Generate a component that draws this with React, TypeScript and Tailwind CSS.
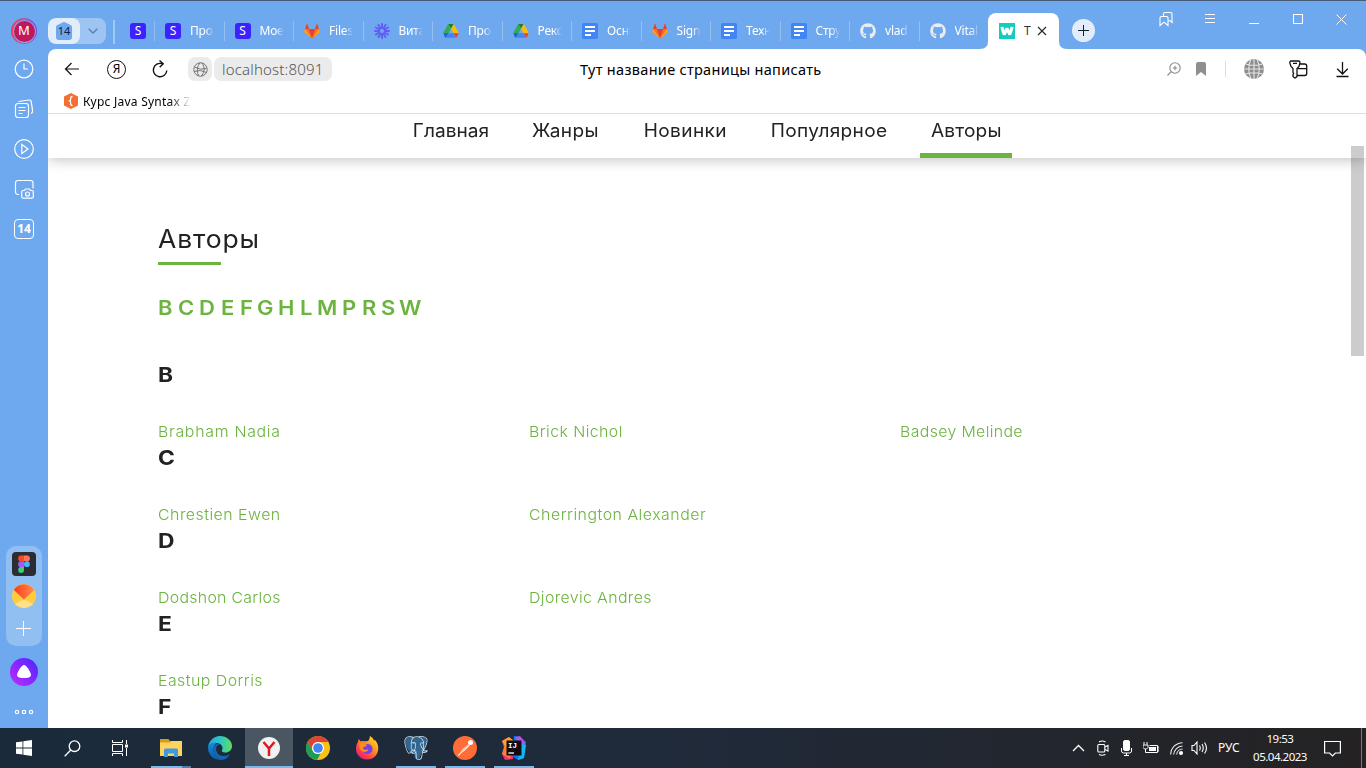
import React from "react";
import { FaGithub } from "react-icons/fa";
import { SiPostgresql } from "react-icons/si";

const UI = "font-['Noto_Sans','Open_Sans',sans-serif]";
const PAGE = "font-[Inter,'Open_Sans',sans-serif]";

function SIcon() {
  return (
    <span className="flex size-4 items-center justify-center rounded-[3px] bg-[#3d22ff] text-[12px] leading-none text-white">S</span>
  );
}

function GitlabIcon() {
  return (
    <svg width="16" height="16" viewBox="0 0 16 16">
      <path d="M3 .5 5 6h6l2-5.500L16 9l-8 6.500L0 9z" fill="#fc6d26" />
      <path d="M5 6h6l-3 9.500z" fill="#e24329" />
      <path d="m3 .5 2 5.500H1.200zM13 .5l1.800 5.500H11z" fill="#e24329" />
      <path d="M0 9 1.200 6 8 15.500zM16 9l-1.200-3L8 15.500z" fill="#fca326" />
    </svg>
  );
}

function LoomIcon() {
  return (
    <svg width="16" height="16" viewBox="-8 -8 16 16" stroke="#625df5" strokeWidth="2" strokeLinecap="round">
      <path d="M0-7V-3M0 3V7M-7 0H-3M3 0H7M3.500-6.060 1.500-2.600M-1.500 2.600-3.500 6.060M6.060-3.500 2.600-1.500M-2.600 1.500-6.060 3.500M-3.500-6.060-1.500-2.600M1.500 2.600 3.500 6.060M-6.060-3.500-2.600-1.500M2.600 1.500 6.060 3.500" />
      <circle r="3.300" fill="none" strokeWidth="1.200" />
    </svg>
  );
}

function DriveIcon() {
  return (
    <svg width="16" height="16" viewBox="0 0 16 16">
      <path d="M5.200 1h5.600L8 5.800z" fill="#188038" />
      <path d="M5.200 1 8 5.800 3.800 13 .6 10.800Q.3 10 .7 9z" fill="#34a853" />
      <path d="M10.800 1 15.300 9q.3.700.1 1.300h-4.900L8 5.800z" fill="#fbbc04" />
      <path d="M.5 10.300h5L3 14.700Q2 14.500 1.500 13.500z" fill="#1967d2" />
      <path d="M5.500 10.300h5.200l2.300 4.400H3z" fill="#4285f4" />
      <path d="M10.700 10.300h4.900l-1.300 3.200q-.5 1-1.300 1.200z" fill="#ea4335" />
    </svg>
  );
}

function DocsIcon() {
  return (
    <svg width="16" height="16" viewBox="0 0 16 16">
      <rect width="16" height="16" rx="1.500" fill="#4285f4" />
      <path d="M3 4h10M3 8h10M3 12h6" stroke="#fff" strokeWidth="2" />
    </svg>
  );
}

const github = <FaGithub size={16} color="#e9edf2" />;

const tabs: { icon: React.ReactNode; title: string }[] = [
  { icon: <SIcon />, title: "Про" },
  { icon: <SIcon />, title: "Мое" },
  { icon: <GitlabIcon />, title: "Files" },
  { icon: <LoomIcon />, title: "Вита" },
  { icon: <DriveIcon />, title: "Про" },
  { icon: <DriveIcon />, title: "Рекс" },
  { icon: <DocsIcon />, title: "Осн" },
  { icon: <GitlabIcon />, title: "Sign" },
  { icon: <DocsIcon />, title: "Техн" },
  { icon: <DocsIcon />, title: "Стру" },
  { icon: github, title: "vlad" },
  { icon: github, title: "Vital" },
];

function TabBar() {
  return (
    <div className="flex h-[48px] shrink-0">
      <div className="mt-[17px] flex h-[26px] w-[58px] overflow-hidden rounded-lg bg-[#9dc4f3]">
        <div className="flex w-8 items-center justify-center rounded-lg bg-[#e2edfb]">
          <svg width="18" height="18" viewBox="0 0 18 18">
            <path d="M9 0q.8 0 1.500.4l5.500 2.900q1 .6 1 1.700v10q0 3-3 3H4q-3 0-3-3V5q0-1.100 1-1.700L7.500.4Q8.200 0 9 0" fill="#6ea8ee" />
            <text x="9" y="13" textAnchor="middle" fontSize="11" fill="#10223c">14</text>
          </svg>
        </div>
        <svg className="m-auto" width="10" height="6" viewBox="0 0 10 6" fill="none" stroke="#5580b5" strokeWidth="1.300">
          <path d="m.7.700 4.300 4.300L9.300.7" />
        </svg>
      </div>
      <div className="mt-[19px] ml-[7px] h-6 w-[2px] bg-[#a3c8f5]" />
      <div className="mt-[22px] ml-[15px] w-6"><SIcon /></div>
      {tabs.map((t, i) => (
        <div key={i} className="mt-[20px] flex h-5 w-[69.500px] shrink-0 items-center border-l border-[#93bff3]">
          <span className="ml-[10px] flex size-4 shrink-0">{t.icon}</span>
          <span className="ml-[9px] w-[31px] text-[12px] leading-5 tracking-[-.2px] whitespace-nowrap text-white [mask-image:linear-gradient(90deg,#000_50%,transparent_78%)]">{t.title}</span>
        </div>
      ))}
      <div className="relative mt-3 flex h-9 w-[71px] shrink-0 items-center rounded-t-lg bg-white">
        <svg className="absolute bottom-0 -left-2" width="8" height="8"><path d="M8 0v8H0q8 0 8-8" fill="#fff" /></svg>
        <svg className="absolute -right-2 bottom-0" width="8" height="8"><path d="M0 0v8h8Q0 8 0 0" fill="#fff" /></svg>
        <svg className="ml-[11px]" width="16" height="16" viewBox="0 0 16 16">
          <rect width="16" height="16" fill="#13cdbd" />
          <path d="M2.800 4 5.200 11.500 8 5.500 10.800 11.500 13.200 4" fill="none" stroke="#fff" strokeWidth="3" strokeLinejoin="bevel" />
        </svg>
        <span className="ml-[9px] w-2 text-[12px] text-[#333]">Т</span>
        <svg className="ml-[5px]" width="10" height="10" viewBox="0 0 10 10" stroke="#222b38" strokeWidth="1.200"><path d="m1 1 8 8m0-8-8 8" /></svg>
      </div>
      <div className="mt-[18px] ml-[13px] flex size-[23px] shrink-0 items-center justify-center rounded-full bg-[#e2edfb]">
        <svg width="11" height="11" stroke="#15202e"><path d="M5.500 0v11M0 5.500h11" /></svg>
      </div>
      <svg className="mt-[11px] ml-[64px] shrink-0" width="14" height="15" viewBox="0 0 14 15" fill="none" stroke="#fff" strokeWidth="1.100">
        <path d="M1 13.500V6q0-1.500 1.500-1.500h5Q9 4.500 9 6v7.500L5 10.200zM4.500 4.500V2Q4.500.5 6 .5h5.500Q13 .5 13 2v8.500l-2-1.800H9" />
      </svg>
      <svg className="mt-[13px] ml-[32px] shrink-0" width="10" height="11" stroke="#fff"><path d="M0 .5h10M0 4.500h10M0 8.500h10" /></svg>
      <svg className="mt-[22px] ml-[34px] shrink-0" width="10" height="2" stroke="#fff"><path d="M0 .5h10" /></svg>
      <svg className="mt-[13px] ml-[34px] shrink-0" width="10" height="11" fill="none" stroke="#fff"><rect x=".5" y=".5" width="9" height="9" /></svg>
      <svg className="mt-[13px] ml-[33px] shrink-0" width="11" height="11" stroke="#fff"><path d="m.5.500 10 10m0-10-10 10" /></svg>
    </div>
  );
}

function Toolbar() {
  return (
    <div className="flex h-[40px] items-center text-black">
      <svg className="ml-4" width="16" height="14" viewBox="0 0 16 14" fill="none" stroke="#111" strokeWidth="1.200"><path d="M15 7H1.500M7.500 1l-6 6 6 6" /></svg>
      <div className="ml-[27px] flex size-[19px] items-center justify-center rounded-full border-[1.500px] border-[#111] text-[12px] leading-none">Я</div>
      <svg className="ml-[26px]" width="17" height="18" viewBox="0 0 17 18" fill="none" stroke="#111" strokeWidth="1.400"><path d="M14.800 10.500a6.700 6.700 0 1 1-4.600-6.800M7.500.5l3.700 3.200-3.500 3.500" /></svg>
      <div className="ml-[19px] flex h-6 w-6 items-center justify-center rounded-[7px] bg-[#ebebeb]">
        <svg width="15" height="15" viewBox="0 0 15 15" fill="none" stroke="#757575"><circle cx="7.500" cy="7.500" r="6.700" /><path d="M1.500 5q5.500 3.500 12 1.500M1.200 9.500Q7 7 13.500 10.500M7 .8Q2.500 6 5.500 14M9 .9q4.500 6-.5 13.400" /></svg>
      </div>
      <div className="ml-[2px] flex h-6 w-[118px] items-center rounded-[7px] bg-[#ebebeb] pl-2 text-[15px] font-light tracking-[.180px] text-[#555]">localhost:8091</div>
      <div className="ml-[248px] w-[260px] pt-px text-[14.500px] tracking-[.3px] whitespace-nowrap">Тут название страницы написать</div>
      <svg className="ml-[327px]" width="14" height="15" viewBox="0 0 14 15" fill="none" stroke="#8a8a8a" strokeWidth="1.100"><circle cx="8" cy="6" r="5.200" /><path d="M4.200 9.700.5 13.500M8 3.700v4.600M5.700 6h4.600" /></svg>
      <svg className="ml-[15px]" width="10" height="14"><path d="M0 14V2q0-2 2-2h6q2 0 2 2v12l-5-4z" fill="#8f8f8f" /></svg>
      <div className="ml-[19px] h-4 w-px bg-[#ddd]" />
      <svg className="ml-[18px]" width="20" height="20" viewBox="0 0 20 20" fill="none"><circle cx="10" cy="10" r="10" fill="#8d8d8d" /><path d="M10 0v20M0 10h20M1.500 5q8.500 2.500 17 0M1.500 15q8.500-2.500 17 0M7 0Q2.500 10 7 20M13 0q4.500 10 0 20" stroke="#e5e5e5" strokeWidth="1.100" /></svg>
      <svg className="ml-[25px]" width="19" height="19" viewBox="0 0 19 19" fill="none" stroke="#111" strokeWidth="1.300"><path d="M2 1h7.500q1.500 0 1.500 1.700L10 6.500 8 8.500v8l-1.500 1.300H5.500L4 16.500v-2l.7-1-.7-1v-4l-2-2L.8 3Q.8 1 2 1M4 3.300h4M10.700 4h5q2 0 2 2v7.500q0 2-2 2H8M9 8.700h8.700" /></svg>
      <svg className="ml-[28px]" width="13" height="17" viewBox="0 0 13 17" fill="none" stroke="#111" strokeWidth="1.300"><path d="M6.500 1v12M1.200 7.700l5.300 5.300 5.300-5.300M.5 15.500h12" /></svg>
    </div>
  );
}

const nav = [
  { t: "Главная", w: "w-[97px]", tr: "tracking-[.020px]" },
  { t: "Жанры", w: "w-[88px]", tr: "tracking-[.350px]" },
  { t: "Новинки", w: "w-[105px]", tr: "tracking-[.380px]" },
  { t: "Популярное", w: "w-[138px]", tr: "tracking-[.300px]" },
  { t: "Авторы", w: "w-[92px]", tr: "tracking-[.150px]" },
];

const letters = [
  ["B", "w-[20px]"], ["C", "w-[20.500px]"], ["D", "w-[22px]"], ["E", "w-[19px]"], ["F", "w-[17.500px]"], ["G", "w-[21px]"],
  ["H", "w-[21.500px]"], ["L", "w-[17.500px]"], ["M", "w-[24.500px]"], ["P", "w-[20px]"], ["R", "w-[19.500px]"], ["S", "w-[18px]"], ["W", "w-[24px]"],
];

const sections = [
  { l: "B", names: [["Brabham Nadia", "tracking-[.660px]"], ["Brick Nichol", "tracking-[.390px]"], ["Badsey Melinde", "tracking-[.320px]"]] },
  { l: "C", names: [["Chrestien Ewen", "tracking-[.450px]"], ["Cherrington Alexander", "tracking-[.470px]"]] },
  { l: "D", names: [["Dodshon Carlos", "tracking-[.260px]"], ["Djorevic Andres", "tracking-[.340px]"]] },
  { l: "E", names: [["Eastup Dorris", "tracking-[.430px]"]] },
  { l: "F", names: [] },
];

function WebPage() {
  return (
    <div className={`relative flex min-h-0 flex-1 flex-col overflow-hidden bg-white text-[#222] ${PAGE}`}>
      <nav className="flex h-[44px] shrink-0 gap-[22.500px] pl-[354px] shadow-[0_0_15px_rgba(0,0,0,.3)]">
        {nav.map((n) => (
          <a key={n.t} className={`${n.w} flex h-full justify-center border-b-[5px] pt-[3px] pl-px text-[18px] leading-7 whitespace-nowrap ${n.t === "Авторы" ? "border-[#6cb33f]" : "border-transparent"}`}>
            <span className={`scale-x-106 ${n.tr}`}>{n.t}</span>
          </a>
        ))}
      </nav>
      <main className="pl-[110px]">
        <h1 className="mt-[66px] h-[38px] w-[120px] origin-left scale-x-106 text-[25px] leading-[30px] tracking-[.800px]">Авторы</h1>
        <div className="h-[3px] w-[63px] bg-[#6cb33f]" />
        <div className="mt-[29px] flex h-7 text-[20px] leading-7 font-semibold text-[#6cb33f]">
          {letters.map(([l, w]) => <a key={l} className={`${w} origin-left scale-x-110`}>{l}</a>)}
        </div>
        <div className="mt-[41px]">
          {sections.map((s) => (
            <section key={s.l} className="h-[83px]">
              <h2 className="h-[57px] w-6 origin-left scale-x-114 text-[20px] leading-6 font-bold">{s.l}</h2>
              <div className="flex text-[15px] leading-6 font-light text-[#6cb33f]">
                {s.names.map(([n, tr]) => <a key={n} className={`w-[371px] origin-left scale-x-106 ${tr}`}>{n}</a>)}
              </div>
            </section>
          ))}
        </div>
      </main>
      <div className="absolute top-[32px] right-[2px] h-[210px] w-[13px] bg-black/20" />
    </div>
  );
}

function Sidebar() {
  return (
    <aside className="flex w-12 shrink-0 flex-col items-center text-white">
      <div className="mt-[17px] flex size-[26px] shrink-0 items-center justify-center rounded-full bg-linear-to-r from-[#f03b4f] to-[#6b4cf0] p-[1.500px]">
        <div className="flex size-full items-center justify-center rounded-full bg-[#c2185b] text-[13px] ring-[1px] ring-[#8fa4ea] ring-inset">M</div>
      </div>
      <svg className="mt-[15px] shrink-0" width="20" height="20" viewBox="0 0 20 20" fill="none" stroke="#fff" strokeWidth="1.200"><circle cx="10" cy="10" r="8.800" /><path d="M10 4.500V10h4" /></svg>
      <svg className="mt-[20px] shrink-0" width="20" height="20" viewBox="0 0 20 20" fill="none" stroke="#fff" strokeWidth="1.200"><rect x="1.500" y="4.500" width="13" height="14" rx="2.500" /><path d="M4.500 8.500h7M4.500 11.500h7M4.500 14.500h4M4.500 2.500 15 1q2-.2 2.300 1.800l1.300 9q.2 2-1.600 2.700" /></svg>
      <svg className="mt-[20px] shrink-0" width="20" height="20" viewBox="0 0 20 20" fill="none" stroke="#fff" strokeWidth="1.200"><circle cx="10" cy="10" r="9.300" /><path d="M7.800 5.500v9l6.200-4.500z" /></svg>
      <svg className="mt-[20px] shrink-0" width="20" height="20" viewBox="0 0 20 20" fill="none" stroke="#fff" strokeWidth="1.200"><path d="M5 15.500H3.500q-2-.3-2-2.500V4q0-2.500 2.500-2.500h12.500Q19 1.500 19 4v5.500M9 11.500h1.500l1-1.500h4l1 1.500H18q1.300 0 1.300 1.200V18q0 1.200-1.300 1.200H9q-1.300 0-1.300-1.200v-5.300q0-1.200 1.300-1.200" /><circle cx="13.500" cy="15" r="2" /></svg>
      <div className="mt-[20px] flex size-5 shrink-0 items-center justify-center rounded border border-white text-[12px] leading-none font-bold">14</div>
      <div className="mt-auto flex h-[100px] w-9 shrink-0 flex-col items-center rounded-[10px] bg-[#92bff2] pt-[6px]">
        <svg width="24" height="24" viewBox="0 0 24 24"><rect width="24" height="24" rx="4" fill="#2c2c33" /><path d="M12 3.500H9a2.900 2.900 0 0 0 0 5.800h3z" fill="#f24e1e" /><path d="M12 3.500h3a2.900 2.900 0 0 1 0 5.800h-3z" fill="#ff7262" /><path d="M12 9.300H9a2.900 2.900 0 0 0 0 5.800h3z" fill="#a259ff" /><circle cx="14.900" cy="12.200" r="2.900" fill="#45b8fb" /><path d="M9 15.100h3V18a2.900 2.900 0 1 1-3-2.900" fill="#3dcb7e" /></svg>
        <svg className="mt-2" width="24" height="24" viewBox="0 0 24 24"><defs><linearGradient id="mail" x2="1"><stop stopColor="#ff3b16" /><stop offset="1" stopColor="#ff8d52" /></linearGradient></defs><circle cx="12" cy="12" r="12" fill="#ffcc3d" /><path d="M12 15.500 2.800 19.700a12 12 0 0 0 18.400 0z" fill="#ffe08a" /><path d="M12 15.500 1.800 6a12 12 0 0 1 20.400 0z" fill="url(#mail)" /></svg>
        <svg className="mt-[13px] mr-px" width="15" height="15" stroke="#fff"><path d="M7.500 0v15M0 7.500h15" /></svg>
      </div>
      <svg className="mt-3 shrink-0" width="28" height="28" viewBox="0 0 28 28"><defs><linearGradient id="alice" x1="0" y1="1" x2="1" y2="0"><stop stopColor="#c32bff" /><stop offset="1" stopColor="#4a26ff" /></linearGradient></defs><circle cx="14" cy="14" r="14" fill="url(#alice)" /><path d="M14 7c2.500 0 7 7.500 7 10s-3.500 3-7 3-7-.5-7-3 4.500-10 7-10" fill="#fff" /></svg>
      <svg className="mt-[23px] mb-[13px] shrink-0" width="20" height="6" fill="none" stroke="#fff" strokeWidth="1.200"><circle cx="3" cy="3" r="1.700" /><circle cx="10" cy="3" r="1.700" /><circle cx="17" cy="3" r="1.700" /></svg>
    </aside>
  );
}

function Yandex() {
  return <svg width="22" height="22" viewBox="0 0 22 22"><circle cx="11" cy="11" r="11" fill="#f1f1f1" /><path d="m5.500 5 5.500 6.500L16.500 5M11 11v8" fill="none" stroke="#e0191f" strokeWidth="2.500" /></svg>;
}
function Explorer() {
  return <svg width="22" height="20" viewBox="0 0 22 20"><path d="M0 1.500Q0 1 .7 1h7.800l1.500 2h11.500v5H0z" fill="#d99a1b" /><path d="M0 4.500h10l1.500-1.500H22V18H0z" fill="#ffd35c" /><path d="M4 19v-7q0-1.500 1.500-1.500h11Q18 10.500 18 12v7h-4v-3.500H8V19z" fill="#3f9be0" /></svg>;
}
function Edge() {
  return (
    <svg width="24" height="24" viewBox="0 0 24 24">
      <defs>
        <linearGradient id="edgeTop"><stop stopColor="#1da8e6" /><stop offset=".5" stopColor="#2ec5c7" /><stop offset="1" stopColor="#60df55" /></linearGradient>
        <linearGradient id="edgeLow" x2="0" y2="1"><stop stopColor="#1689dc" /><stop offset="1" stopColor="#0c59a4" /></linearGradient>
      </defs>
      <path d="M0 12C.5 5 5.500 0 12 0s12 4.500 12 10c0 4-3 6.500-6.500 6.500S13.500 15 14 14c1-1 1-4-2-6S2 7 0 12" fill="url(#edgeTop)" />
      <path d="M0 12C.8 7.500 5 6 8.500 7c-2 1.500-3 4-3 6.500 0 5.500 4 9.500 8.500 10.300A12 12 0 0 1 0 12" fill="url(#edgeLow)" />
      <path d="M12 8.200C6 9 7.500 18 12.500 19.500c3.500 1 7 .3 9.500-1.500-2 4-5 5.700-8.500 6C8.500 22.500 5 18 5.500 13c.5-4 4-6.500 6.500-4.800" fill="#1366b5" />
    </svg>
  );
}
function Chrome() {
  return (
    <svg width="24" height="24" viewBox="0 0 24 24">
      <circle cx="12" cy="12" r="12" fill="#fbc116" />
      <path d="M1.600 6A12 12 0 0 1 22.400 6H12a6 6 0 0 0-5.200 9z" fill="#db4437" />
      <path d="M1.600 6 6.800 15A6 6 0 0 0 12 18l2.600-.6-3.600 6.600A12 12 0 0 1 1.600 6" fill="#1f9d57" />
      <circle cx="12" cy="12" r="6" fill="#fff" /><circle cx="12" cy="12" r="4.800" fill="#4285f4" />
    </svg>
  );
}
function Firefox() {
  return (
    <svg width="24" height="24" viewBox="0 0 24 24">
      <defs><linearGradient id="fox" x1="1" x2=".2" y2="1"><stop stopColor="#fff04a" /><stop offset=".4" stopColor="#ff9c1e" /><stop offset=".75" stopColor="#ff4444" /><stop offset="1" stopColor="#e31587" /></linearGradient></defs>
      <path d="M15 0c2.500 1.500 3.500 3 4 4.500l1-.5c3 3 3.800 7 3 11-1.200 5-5.500 8.500-11 8.500C5.500 23.500 1 18.500 1 13c0-3 .8-5.500 2-7l.5-3L6 5.500c1-.5 2.500-.6 3.500-.2L13 5q2-2.500 2-5" fill="url(#fox)" />
      <circle cx="12.500" cy="13" r="5" fill="#7542e5" />
      <path d="M4 7c3-1 5 1 7.500 1.500 1 1.500-1 2-2.500 2.500s-1 2 0 2.500c1.500.8 3-.8 4.500.3-2 3.700-7 2.200-8.500-.8C4 11 4 9 4 7" fill="#ff8b20" />
    </svg>
  );
}
function Postgres() {
  return (
    <svg width="24" height="24" viewBox="0 0 24 24">
      <path d="M5 1.200C8 .2 9.500 1 11 1.600 13 .8 15 .3 17 .6c4 .3 6 2.900 5.800 5.400-.2 3-1.800 5.600-3 8.200l3.200.8c-.8 1.500-3 2-5.800 1.800L16 21c-.5 2.500-4.500 3.200-5.300.5L10 16l-2.500 1C4 15.500 1 8.500 1 5c0-2 2-3.500 4-3.800" fill="#336791" />
      <SiPostgresql x="0" y="0" size={24} color="#d7e3ed" />
    </svg>
  );
}
function Postman() {
  return <svg width="24" height="24" viewBox="0 0 24 24"><circle cx="12" cy="12" r="12" fill="#ff6c37" /><circle cx="17.500" cy="6.500" r="2.500" fill="#fff" /><path d="m15.500 8 1.200 1.500-6 6-3 .5 1.500-2.500zM5 19l4-4 .8.800L5.500 20z" fill="#fff" /><path d="m15.800 8.500-7 7" stroke="#ff6c37" strokeWidth=".7" /></svg>;
}
function Idea() {
  return (
    <svg width="24" height="24" viewBox="0 0 24 24">
      <path d="M0 5 7 1l5 5-1 17-8 1-3-6 2-6z" fill="#fe2c73" /><path d="M0 18 3 8l7 5-2 10z" fill="#f9822e" /><path d="m0 5 7-4 5 4-8 7z" fill="#f6a331" /><path d="m12 0 6 1 6 5-2 16-6 2-6-4z" fill="#0c7bf5" /><path d="m13 1 5-1 5 6-2 9z" fill="#b651f1" /><path d="m20 8 4 1-2 13-6 2z" fill="#14b5f3" />
      <rect x="4.500" y="4.500" width="15" height="15" fill="#120b12" />
      <text x="6" y="12" fontSize="7.500" fontWeight="700" fontFamily="Liberation Mono, monospace" fill="#fff">IJ</text>
      <path d="M6.500 17h5.500" stroke="#fff" strokeWidth="1.300" />
    </svg>
  );
}

function Taskbar() {
  const apps = [
    { i: <Explorer />, run: true }, { i: <Edge />, run: false }, { i: <Yandex />, run: true, active: true }, { i: <Chrome />, run: false },
    { i: <Firefox />, run: false }, { i: <Postgres />, run: true }, { i: <Postman />, run: true }, { i: <Idea />, run: true },
  ];
  return (
    <footer className="flex h-10 shrink-0 items-center bg-linear-to-r from-[#1b2a3b] via-[#202a3a] to-[#242223] text-white">
      <svg className="ml-4 shrink-0" width="16" height="16" viewBox="0 0 16 16" fill="#fff"><path d="M0 2.300 6.500 1.400v6.200H0zM7.300 1.300 16 0v7.600H7.300zM0 8.400h6.500v6.200L0 13.700zM7.300 8.400H16V16l-8.700-1.300z" /></svg>
      <svg className="ml-8 shrink-0" width="17" height="17" viewBox="0 0 17 17" fill="none" stroke="#fff" strokeWidth="1.300"><circle cx="10.500" cy="6.200" r="5.300" /><path d="M6.800 10 .7 16.200" /></svg>
      <svg className="ml-[31px] shrink-0" width="16" height="16" viewBox="0 0 16 16" fill="none" stroke="#fff"><path d="M.5 0v2.500h10V0M.5 16v-2.500h10V16M.5 4.500h10v7H.5zM14.500 0v4M14.500 8v8" /><path d="M13 6h3" strokeWidth="3" /></svg>
      <div className="ml-[19px] flex h-full gap-px">
        {apps.map((a, n) => (
          <div key={n} className={`relative flex h-full w-12 items-center justify-center ${a.active ? "bg-[#4a5662]" : ""}`}>
            {a.i}
            {a.run && n === 0 && <span className="absolute right-1 bottom-0 h-[2px] w-[9px] bg-[#527fa5]" />}
            {a.run && <span className={`absolute bottom-0 h-[2px] bg-[#76b9ed] ${a.active ? "inset-x-0" : n === 0 ? "right-[13px] left-1" : "inset-x-1"}`} />}
          </div>
        ))}
      </div>
      <svg className="ml-auto shrink-0" width="13" height="8" fill="none" stroke="#fff" strokeWidth="1.300"><path d="m1 7 5.500-5.500L12 7" /></svg>
      <svg className="ml-[12px] shrink-0" width="12" height="16" viewBox="0 0 12 16" fill="none" stroke="#fff" strokeWidth="1.100"><rect x=".8" y="4.500" width="7" height="7.500" rx="1" /><path d="m8 7 3-1.500v5.500L8 9.500M2 2q3-2 6.500 0M2 14.500q3 1.500 6.500 0" /></svg>
      <svg className="ml-[12px] shrink-0" width="11" height="16" viewBox="0 0 11 16" fill="none" stroke="#fff"><rect x="2.500" y=".5" width="6" height="10" rx="1.500" fill="#fff" /><path d="M.5 8v3q0 2 2 2h6q2 0 2-2V8M5.500 13v2.500M3 15.500h5" /></svg>
      <svg className="ml-[11px] shrink-0" width="16" height="12" viewBox="0 0 16 12" fill="none" stroke="#fff"><path d="M1 0v2.500M4 0v2.500M0 3h5v2.500L3.500 7h-2L0 5.500zM2.500 7v3.500h12V3.500H6.500M14.500 5H16v4h-1.500" /><path d="M6 7h7" strokeWidth="4" /></svg>
      <svg className="ml-[11px] shrink-0" width="13" height="13" viewBox="0 0 13 13" fill="none" stroke="#eee" strokeWidth="1.100"><path d="M.7 12.500A12 12 0 0 1 12.500.7M3.700 12.500a9 9 0 0 1 8.800-8.500M6.700 12.500a6 6 0 0 1 5.800-5.500" /><circle cx="11" cy="11" r="1.500" fill="#fff" /></svg>
      <svg className="ml-[8px] shrink-0" width="17" height="14" viewBox="0 0 17 14" fill="none" stroke="#fff" strokeWidth="1.100"><path d="M1 4.500h2l3-3.500v12L3 9.500H1zM8.500 4.500q1.500 2.500 0 5M11 3q2.500 4 0 8M13.500 1.500q4 5.500 0 11" /></svg>
      <div className="ml-[10px] w-[24px] text-[12px]">РУС</div>
      <div className="ml-[8px] w-[60px] text-center text-[11.500px] leading-[18px] tracking-[-.5px]">19:53<br />05.04.2023</div>
      <svg className="ml-[14px] shrink-0" width="17" height="17" viewBox="0 0 17 17" fill="none" stroke="#fff" strokeWidth="1.200"><path d="M.6 1.500h15.800v11.500h-5L8.500 16l-2.900-3h-5z" /></svg>
      <div className="mr-1 ml-[20px] h-full w-px bg-[#77777a]" />
    </footer>
  );
}

export default function App() {
  return (
    <div className={`flex h-[768px] w-[1366px] flex-col overflow-hidden bg-[#6ea8ee] ${UI}`}>
      <div className="h-px shrink-0 bg-[#465a74]" />
      <div className="flex min-h-0 flex-1">
        <Sidebar />
        <div className="flex min-w-0 flex-1 flex-col">
          <TabBar />
          <div className="flex min-h-0 flex-1 flex-col overflow-hidden rounded-t-lg bg-white">
            <Toolbar />
            <div className="flex h-[25px] shrink-0 items-center border-b border-[#e0e0e0] pl-[15px]">
              <svg width="16" height="16" viewBox="0 0 16 16"><path d="m8 0 7 3.500v9L8 16l-7-3.500v-9z" fill="#f36f32" /><path d="M9.500 3.500q-2 0-1.800 2 .2 2-1.200 2.500 1.400.5 1.200 2.500-.2 2 1.800 2" fill="none" stroke="#fff" strokeWidth="1.300" /></svg>
              <span className="ml-1 w-[108px] pt-px text-[12px] tracking-[.02em] whitespace-nowrap text-black [mask-image:linear-gradient(90deg,#000_80%,transparent)]">Курс Java Syntax Z</span>
            </div>
            <WebPage />
          </div>
        </div>
      </div>
      <Taskbar />
    </div>
  );
}
